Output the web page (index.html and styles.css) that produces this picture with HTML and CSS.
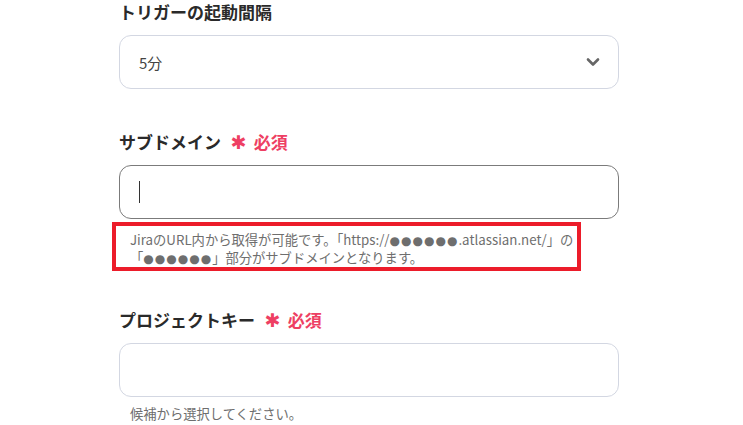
FILE: index.html
```html
<!DOCTYPE html>
<html lang="ja">
<head>
  <meta charset="UTF-8" />
  <title>Jira 設定</title>
  <link rel="stylesheet" href="styles.css">
</head>
<body>
  <div class="form">
    <div class="group">
      <div class="label">トリガーの起動間隔</div>
      <div class="field select">
        <span class="value">5分</span>
        <svg class="chevron" width="14" height="10" viewBox="0 0 14 10">
          <path d="M2 2.5 L7 7.5 L12 2.5" fill="none" stroke="#666" stroke-width="2.6" stroke-linecap="round" stroke-linejoin="round" />
        </svg>
      </div>
    </div>

    <div class="group">
      <div class="label">サブドメイン <span class="req"><span class="star">✱</span>必須</span></div>
      <div class="field focused"><span class="caret"></span></div>
      <p class="hint marked">JiraのURL内から取得が可能です。「https://<span class="dots">●●●●●●</span>.atlassian.net/」の<br>「<span class="dots">●●●●●●</span>」部分がサブドメインとなります。</p>
    </div>

    <div class="group">
      <div class="label">プロジェクトキー <span class="req"><span class="star">✱</span>必須</span></div>
      <div class="field"></div>
      <p class="hint small-gap">候補から選択してください。</p>
    </div>
  </div>
</body>
</html>
```

FILE: styles.css
```css
body {
  margin: 0;
  background: #ffffff;
  font-family: "Noto Sans CJK JP", "Noto Sans", sans-serif;
  color: #2b2b2b;
}

.form {
  width: 500px;
  padding: 1px 0 0 119px;
}

.group {
  margin-bottom: 42px;
}

.group:last-child {
  margin-bottom: 0;
}

.label {
  height: 22px;
  font-size: 17px;
  font-weight: 700;
  line-height: 22px;
  margin-bottom: 12px;
  color: #2a2a2a;
}

.req {
  color: #ee3f63;
  margin-left: 6px;
}

.star {
  font-family: "DejaVu Sans", sans-serif;
  font-size: 19px;
  line-height: 0;
  margin-right: 7px;
}

.field {
  box-sizing: border-box;
  height: 54px;
  border: 1px solid #d3d7e2;
  border-radius: 12px;
  background: #fff;
  display: flex;
  align-items: center;
  padding: 0 18px 0 19px;
}

.field.focused {
  border-color: #7b7b7b;
}

.select {
  justify-content: space-between;
}

.value {
  font-size: 15px;
  color: #444;
}

.caret {
  display: block;
  width: 1px;
  height: 22px;
  background: #333;
}

.hint {
  position: relative;
  margin: 12px 0 0;
  padding-left: 11px;
  font-size: 13.3px;
  line-height: 18px;
  color: #6e6e6e;
}

.dots {
  font-family: "DejaVu Sans", sans-serif;
  font-size: 12px;
  line-height: 0;
  letter-spacing: 1px;
}

.hint.small-gap {
  margin-top: 8px;
}

.hint.marked::after {
  content: "";
  position: absolute;
  left: -7px;
  right: 38px;
  top: -9px;
  bottom: -4px;
  border: 4px solid #ec1c2a;
}
```
